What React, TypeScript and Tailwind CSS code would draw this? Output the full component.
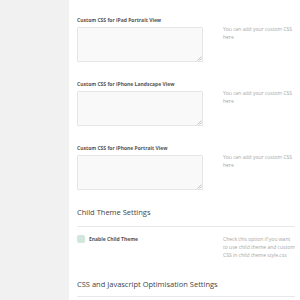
import React from "react";

const cssFields: { label: string; help: string[] }[] = [
  { label: "Custom CSS for iPad Portrait View", help: ["You can add your custom CSS", "here"] },
  { label: "Custom CSS for iPhone Landscape View", help: ["You can add your custom CSS", "here"] },
  { label: "Custom CSS for iPhone Portrait View", help: ["You can add your custom CSS", "here"] },
];

const Field: React.FC<{ label: string; help: string[] }> = ({ label, help }) => (
  <div className="mb-[19px]">
    <div className="text-[5px] leading-[7px] font-bold text-[#555] mb-[3px] whitespace-nowrap">{label}</div>
    <div className="flex">
      <div className="relative">
        <textarea className="block w-[126px] h-[35px] bg-[#f9f9f9] border border-[#e6e6e6] rounded-[1px] outline-none resize-none" />
        {/* resize grip */}
        <svg className="absolute right-[1px] bottom-[1px]" width="5" height="5" viewBox="0 0 5 5">
          <path d="M4.5 0.5 L0.5 4.5 M4.5 2.5 L2.5 4.5" stroke="#b5b5b5" strokeWidth="0.8" />
        </svg>
      </div>
      <div className="ml-[20px] -mt-[1px] text-[5px] leading-[7.5px] text-[#a6a6a6] whitespace-nowrap">
        {help.map((line) => (
          <div key={line}>{line}</div>
        ))}
      </div>
    </div>
  </div>
);

const App: React.FC = () => {
  return (
    <div className="flex w-[300px] h-[300px] overflow-hidden bg-white" style={{ fontFamily: '"Open Sans", sans-serif' }}>
      {/* admin sidebar */}
      <div className="w-[69px] shrink-0 bg-[#f1f1f1]" />

      <div className="flex-1 pl-[8px] pr-[7px] pt-[17px]">
        {cssFields.map((f) => (
          <Field key={f.label} label={f.label} help={f.help} />
        ))}

        <div className="-mt-[2px] text-[7.5px] leading-[10px] text-[#444] whitespace-nowrap">Child Theme Settings</div>
        <div className="mt-[9px] border-t border-[#e8e8e8]" />

        <div className="flex mt-[7px]">
          <div className="w-[146px] flex items-start pt-[1px]">
            <div className="w-[8px] h-[8px] rounded-[2px] bg-[#d2e6de]" />
            <span className="ml-[4px] text-[5px] leading-[8px] font-bold text-[#555] whitespace-nowrap">Enable Child Theme</span>
          </div>
          <div className="pt-[1px] text-[5px] leading-[8px] text-[#a6a6a6] whitespace-nowrap">
            <div>Check this option if you want</div>
            <div>to use child theme and custom</div>
            <div>CSS in child theme style.css</div>
          </div>
        </div>

        <div className="mt-[20px] text-[7.5px] leading-[10px] text-[#444] whitespace-nowrap">CSS and Javascript Optimisation Settings</div>
        <div className="mt-[7px] border-t border-[#e8e8e8]" />
      </div>
    </div>
  );
};

export default App;
